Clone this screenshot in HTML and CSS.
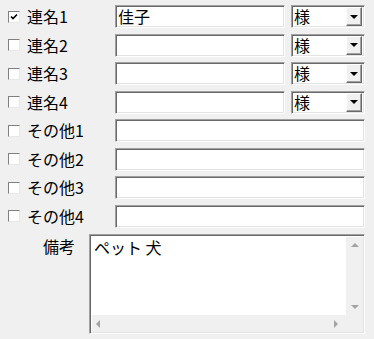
FILE: index.html
```html
<!DOCTYPE html>
<html lang="ja">
<head>
    <meta charset="UTF-8">
    <title>連名</title>
    <link rel="stylesheet" href="styles.css">
</head>
<body>
    <div class="form">
        <div class="row">
            <span class="check checked">
                <svg width="8" height="8" viewBox="0 0 8 8"><polyline points="1,3.5 3,5.5 7,1.5" fill="none" stroke="#000" stroke-width="1.6"/></svg>
            </span>
            <label class="name">連名1</label>
            <div class="field short">佳子</div>
            <div class="combo"><span class="combo-text">様</span><span class="drop"></span></div>
        </div>
        <div class="row">
            <span class="check"></span>
            <label class="name">連名2</label>
            <div class="field short"></div>
            <div class="combo"><span class="combo-text">様</span><span class="drop"></span></div>
        </div>
        <div class="row">
            <span class="check"></span>
            <label class="name">連名3</label>
            <div class="field short"></div>
            <div class="combo"><span class="combo-text">様</span><span class="drop"></span></div>
        </div>
        <div class="row">
            <span class="check"></span>
            <label class="name">連名4</label>
            <div class="field short"></div>
            <div class="combo"><span class="combo-text">様</span><span class="drop"></span></div>
        </div>
        <div class="row">
            <span class="check"></span>
            <label class="name">その他1</label>
            <div class="field long"></div>
        </div>
        <div class="row">
            <span class="check"></span>
            <label class="name">その他2</label>
            <div class="field long"></div>
        </div>
        <div class="row">
            <span class="check"></span>
            <label class="name">その他3</label>
            <div class="field long"></div>
        </div>
        <div class="row">
            <span class="check"></span>
            <label class="name">その他4</label>
            <div class="field long"></div>
        </div>
        <div class="note-row">
            <label class="note-label">備考</label>
            <div class="memo">
                <div class="memo-text">ペット 犬</div>
                <div class="vbar">
                    <span class="arrow up"></span>
                    <span class="arrow down"></span>
                </div>
                <div class="hbar">
                    <span class="arrow left"></span>
                    <span class="arrow right"></span>
                </div>
                <div class="corner"></div>
            </div>
        </div>
    </div>
</body>
</html>
```

FILE: styles.css
```css
html, body {
    margin: 0;
    background-color: #f0f0f0;
}

body {
    font-family: "Noto Sans CJK JP", "DejaVu Sans", sans-serif;
    font-size: 16px;
    color: #000;
}

.form {
    display: flex;
    flex-direction: column;
    gap: 5.5px;
    padding: 5px 0 0 8px;
}

.row {
    display: flex;
    align-items: center;
    height: 23px;
}

.check {
    width: 12px;
    height: 12px;
    box-sizing: border-box;
    border: 1px solid;
    border-color: #808080 #e8e8e8 #e8e8e8 #808080;
    background-color: #fff;
    display: flex;
    align-items: center;
    justify-content: center;
    margin-right: 7px;
}

.name {
    width: 88px;
    line-height: 23px;
    white-space: nowrap;
}

.field,
.combo,
.memo {
    box-sizing: border-box;
    background-color: #fff;
    border: 1px solid;
    border-color: #a0a0a0 #fff #fff #a0a0a0;
    box-shadow: inset 1px 1px 0 #696969, inset -1px -1px 0 #e3e3e3;
}

.field {
    height: 23px;
    line-height: 21px;
    padding-left: 2px;
}

.field.short {
    width: 170px;
}

.field.long {
    width: 250px;
}

.combo {
    width: 74px;
    height: 23px;
    margin-left: 6px;
    display: flex;
    align-items: center;
    padding: 1px 2px 1px 2px;
}

.combo-text {
    flex: 1;
    line-height: 21px;
}

.drop {
    width: 16px;
    height: 19px;
    box-sizing: border-box;
    background-color: #f0f0f0;
    border: 1px solid;
    border-color: #fff #696969 #696969 #fff;
    box-shadow: inset -1px -1px 0 #a0a0a0;
    display: flex;
    align-items: center;
    justify-content: center;
}

.drop::after {
    content: "";
    border-left: 4px solid transparent;
    border-right: 4px solid transparent;
    border-top: 4px solid #000;
}

.note-row {
    display: flex;
    align-items: flex-start;
    margin-top: 1px;
}

.note-label {
    width: 67px;
    text-align: right;
    line-height: 23px;
    margin-top: 1px;
}

.memo {
    width: 276px;
    height: 100px;
    margin-left: 14px;
    display: grid;
    grid-template-columns: 1fr 17px;
    grid-template-rows: 1fr 17px;
    padding: 2px 1px 1px 2px;
}

.memo-text {
    padding: 0 0 0 2px;
    line-height: 20px;
    white-space: pre;
}

.vbar,
.hbar,
.corner {
    background-color: #f0f0f0;
}

.vbar {
    display: flex;
    flex-direction: column;
    justify-content: space-between;
    align-items: center;
    padding: 6px 0 6px;
}

.hbar {
    display: flex;
    justify-content: space-between;
    align-items: center;
    padding: 0 8px 0 4px;
}

.arrow {
    width: 0;
    height: 0;
}

.arrow.up {
    border-left: 4px solid transparent;
    border-right: 4px solid transparent;
    border-bottom: 4px solid #a3a3a3;
}

.arrow.down {
    border-left: 4px solid transparent;
    border-right: 4px solid transparent;
    border-top: 4px solid #a3a3a3;
}

.arrow.left {
    border-top: 4px solid transparent;
    border-bottom: 4px solid transparent;
    border-right: 4px solid #a3a3a3;
}

.arrow.right {
    border-top: 4px solid transparent;
    border-bottom: 4px solid transparent;
    border-left: 4px solid #a3a3a3;
}
```
